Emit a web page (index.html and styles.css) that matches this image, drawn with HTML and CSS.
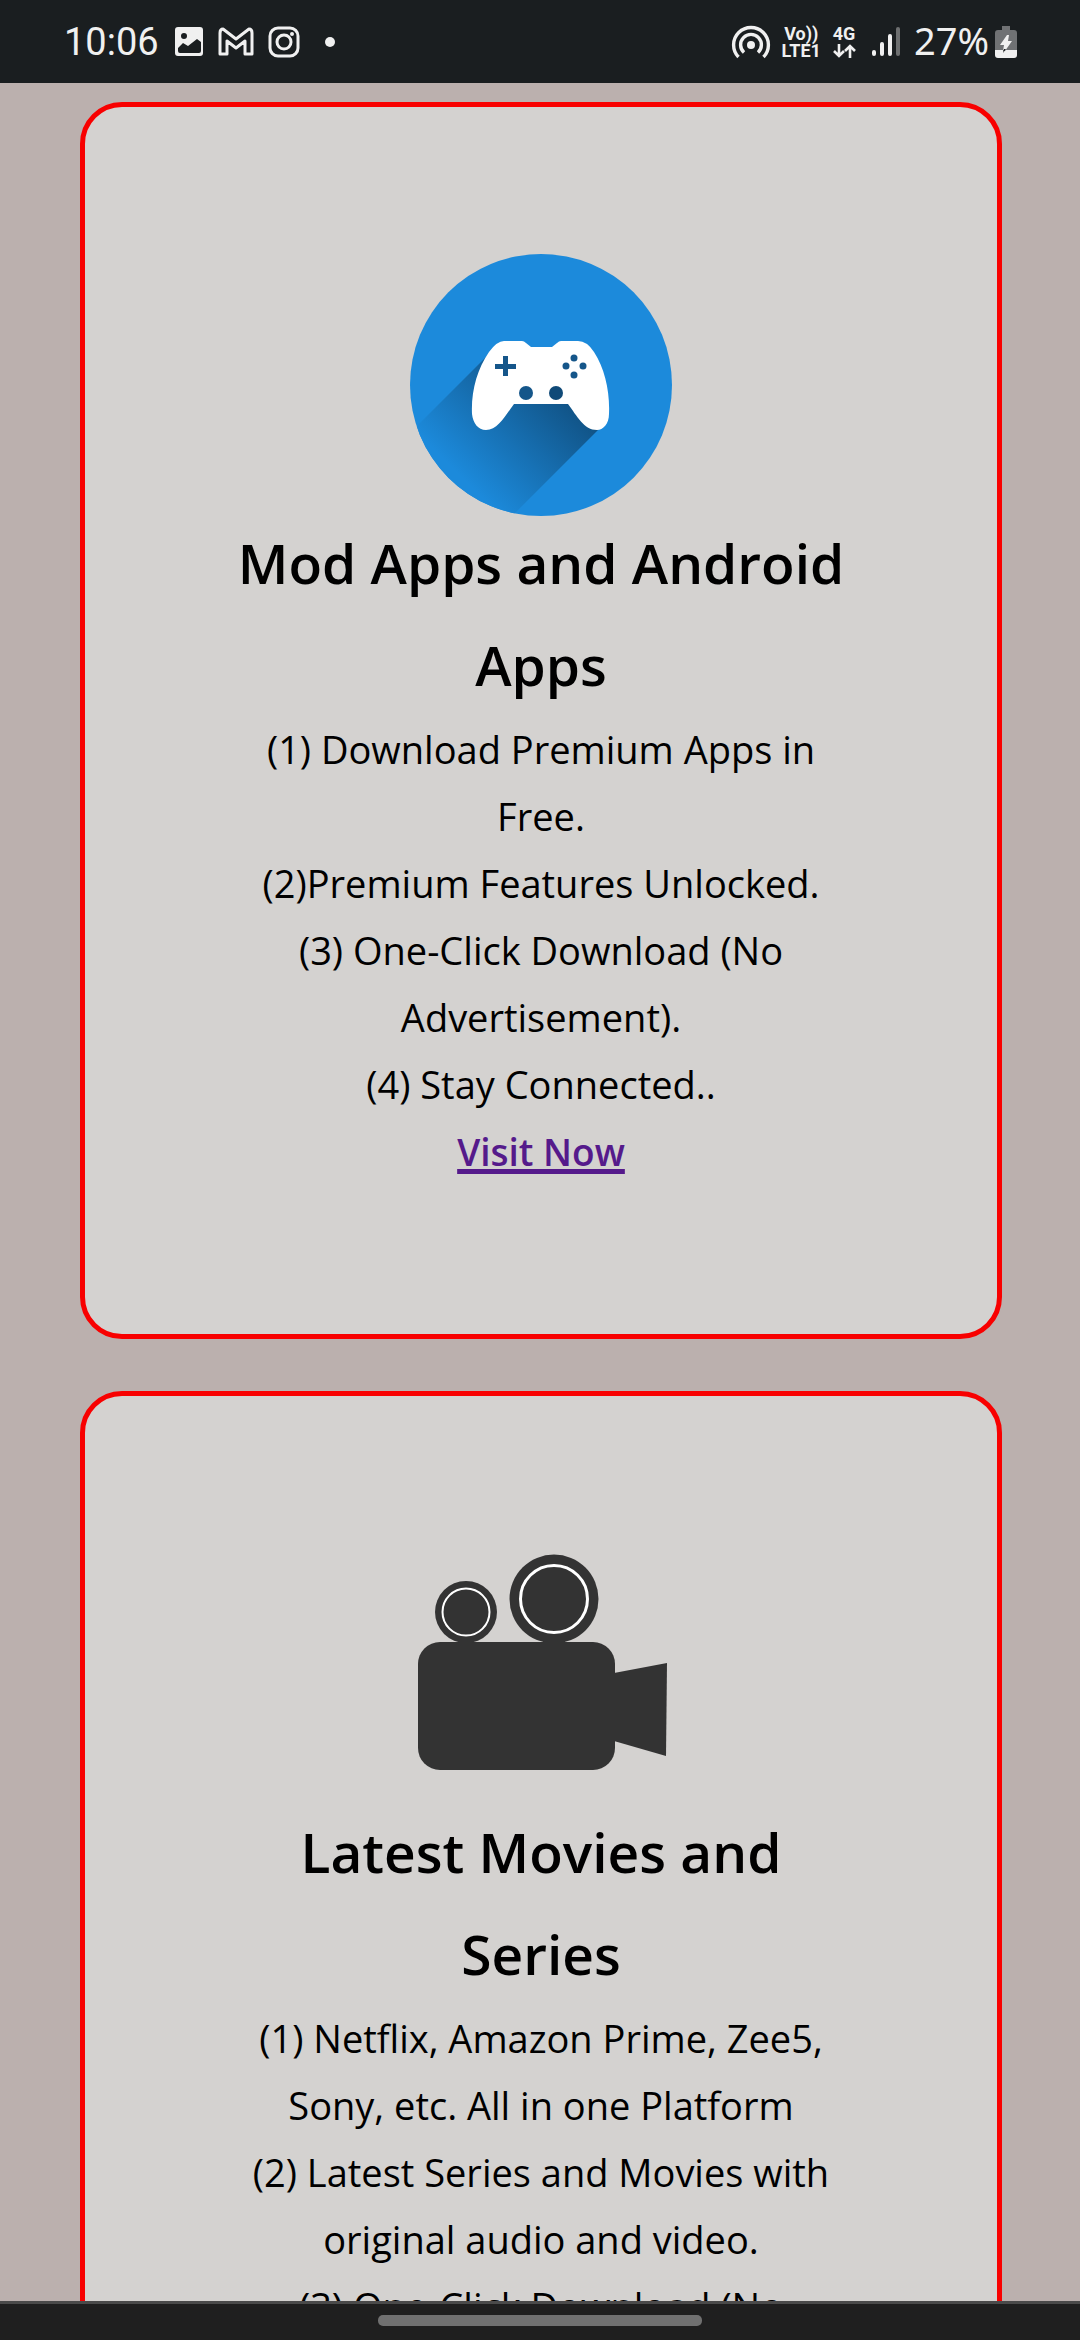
FILE: index.html
```html
<!DOCTYPE html>
<html lang="en">
<head>
<meta charset="utf-8">
<meta name="viewport" content="width=device-width, initial-scale=1">
<title>Mod Apps and Latest Movies</title>
<link rel="stylesheet" href="styles.css">
</head>
<body>
<header class="status">
  <div class="status-group">
    <span class="clock">10:06</span>
    <svg class="icon-picture" width="30" height="30" viewBox="0 0 30 30"><path fill="#f0f0f0" fill-rule="evenodd" d="M4 0H26Q29 0 29 3V26Q29 29 26 29H4Q1 29 1 26V3Q1 0 4 0ZM10 6A3 3 0 1 0 10 12A3 3 0 1 0 10 6ZM4 24Q4 26 6 26H25Q27 26 27 24V15L23 12L14 19L9 16L4 21Z"/></svg>
    <svg class="icon-mail" width="36" height="30" viewBox="0 0 36 30"><path fill="none" stroke="#f0f0f0" stroke-width="3" stroke-linejoin="round" d="M2 27V6Q2 2 5 2L18 12L31 2Q34 2 34 6V27H27V14L18 21L9 14V27Z"/></svg>
    <svg class="icon-camera" width="32" height="32" viewBox="0 0 32 32"><g fill="none" stroke="#f0f0f0" stroke-width="3"><rect x="2" y="2" width="28" height="28" rx="8"/><circle cx="16" cy="16" r="7"/></g><circle cx="24" cy="8" r="2" fill="#f0f0f0"/></svg>
    <span class="dot"></span>
  </div>
  <div class="status-group">
    <svg width="40" height="34" viewBox="0 0 40 34"><g fill="none" stroke="#f0f0f0" stroke-width="3.4"><path d="M7.500 32A17.400 17.400 0 1 1 32.500 32"/><path d="M13 27.500A10.400 10.400 0 1 1 27 27.500"/></g><circle cx="20" cy="20" r="4" fill="#f0f0f0"/></svg>
    <span class="network network-lte"><span>Vo))</span><span>LTE1</span></span>
    <span class="network network-4g"><span>4G</span>
      <svg width="24" height="14" viewBox="0 0 24 14"><path fill="none" stroke="#f0f0f0" stroke-width="2.600" d="M7 0V12M2 7L7 12L12 7M18 14V2M13 7L18 2L23 7"/></svg>
    </span>
    <svg class="icon-signal" width="28" height="30" viewBox="0 0 28 30"><path stroke="#f0f0f0" stroke-width="4" stroke-linecap="round" d="M2 25V27M10 17V27M18 9V27"/><path stroke="#6d6f70" stroke-width="4" stroke-linecap="round" d="M26 2V27"/></svg>
    <span class="percent">27%</span>
    <svg class="icon-battery" width="22" height="34" viewBox="0 0 22 34"><path fill="#707274" d="M7 1H15V5H19Q22 5 22 8V26H0V8Q0 5 3 5H7Z"/><path fill="#f0f0f0" d="M0 25H22V30Q22 33 19 33H3Q0 33 0 30ZM12 10L5 20H9L8 26H10L17 16H13L14 10Z"/><path fill="#1a1e20" d="M9 24H11L8 28Z"/></svg>
  </div>
</header>
<main class="cards">
  <section class="card">
    <svg class="card-art" viewBox="0 0 262 262" role="img" aria-label="Game controller">
      <defs>
        <linearGradient id="shade" gradientUnits="userSpaceOnUse" x1="172" y1="130" x2="65" y2="237"><stop offset="0" stop-color="#0f4a78"/><stop offset="1" stop-color="#1c8adb"/></linearGradient>
        <clipPath id="disc"><circle cx="131" cy="131" r="131"/></clipPath>
      </defs>
      <circle cx="131" cy="131" r="131" fill="#1c8adb"/>
      <g clip-path="url(#disc)"><path fill="url(#shade)" d="M78 101L-20 199L60 304L190 174L170 130Z"/></g>
      <path fill="#fff" d="M94 87H112Q114 87 116 89L121 93H142L147 89Q149 87 151 87H168Q177 87 184 98C195 115 200 138 199 160C199 170 193 176 187 176C174 176 167 162 158 150H104C95 162 88 176 76 176C68 176 63 169 62 160C61 138 67 115 79 98Q87 87 94 87Z"/>
      <path fill="#15568a" d="M93 102H98V110H106V115H98V122H93V115H85V110H93Z"/>
      <g fill="#15568a"><circle cx="116" cy="139" r="7"/><circle cx="164" cy="104" r="3.500"/><circle cx="156" cy="112" r="3.500"/><circle cx="173" cy="112" r="3.500"/><circle cx="164" cy="121" r="3.500"/></g>
      <circle cx="146" cy="139" r="7" fill="#104a78"/>
    </svg>
    <h2>Mod Apps and Android<br>Apps</h2>
    <p>(1) Download Premium Apps in<br>Free.</p>
    <p>(2)Premium Features Unlocked.</p>
    <p>(3) One-Click Download (No<br>Advertisement).</p>
    <p>(4) Stay Connected..</p>
    <a class="visit" href="#apps">Visit Now</a>
  </section>
  <section class="card">
    <svg class="card-art" viewBox="0 0 262 262" role="img" aria-label="Movie camera">
      <g fill="#333">
        <rect x="8" y="99" width="197" height="128" rx="22"/>
        <circle cx="56" cy="69" r="31"/><circle cx="144" cy="56" r="44.500"/>
        <path d="M204 130L257 120L256 213L204 198Z"/>
        <path d="M50 97H62V101H50ZM133 97H155V101H133Z"/>
      </g>
      <circle cx="56" cy="69" r="23.500" fill="none" stroke="#fff" stroke-width="2"/>
      <circle cx="144" cy="56" r="33.500" fill="none" stroke="#fff" stroke-width="3"/>
    </svg>
    <h2>Latest Movies and<br>Series</h2>
    <p>(1) Netflix, Amazon Prime, Zee5,<br>Sony, etc. All in one Platform</p>
    <p>(2) Latest Series and Movies with<br>original audio and video.</p>
    <p>(3) One-Click Download (No<br>Advertisement).</p>
  </section>
</main>
<footer class="nav"><span class="handle"></span></footer>
</body>
</html>
```
FILE: styles.css
```css
* { box-sizing: border-box; }
body {
  margin: 0;
  height: 100vh;
  display: flex;
  flex-direction: column;
  overflow: hidden;
  background: #bbb0ae;
  color: #000;
  font-family: "Open Sans", "Noto Sans", sans-serif;
}
svg { display: block; flex: none; }
.status {
  flex: none;
  height: 83px;
  padding: 0 63px 0 64px;
  display: flex;
  justify-content: space-between;
  align-items: center;
  background: #1a1e20;
  color: #f0f0f0;
}
.status-group { display: flex; align-items: center; }
.clock { font: 400 38px/48px Roboto, sans-serif; }
.icon-picture { margin-left: 15px; }
.icon-mail { margin-left: 14px; }
.icon-camera { margin-left: 14px; }
.dot { width: 10px; height: 10px; margin-left: 25px; border-radius: 50%; background: #f0f0f0; }
.network {
  display: flex;
  flex-direction: column;
  align-items: center;
  font: 700 18px/17px Roboto, sans-serif;
}
.network-lte { margin-left: 11px; }
.network-4g { margin-left: 11px; }
.network-4g svg { margin-top: 2px; }
.icon-signal { margin-left: 16px; }
.percent { margin-left: 14px; padding-bottom: 4px; font: 400 38px/48px "Noto Sans", sans-serif; }
.icon-battery { margin-left: 6px; }
.cards {
  flex: 1;
  min-height: 0;
  overflow: hidden;
  padding: 19px 78px 0 80px;
}
.card {
  margin-bottom: 52px;
  padding: 147px 100px 149px;
  display: flex;
  flex-direction: column;
  align-items: center;
  border: 5px solid #f80000;
  border-radius: 42px;
  background: #d4d2d0;
  text-align: center;
  font-size: 38px;
  line-height: 67px;
}
.card-art { width: 262px; height: 262px; }
.card h2 { margin: -4px 0 0; font-size: 55px; line-height: 102px; font-weight: 600; }
.card p { margin: 0; }
.visit { color: #551a8b; font-size: 37px; font-weight: 600; text-decoration-thickness: 5px; }
.nav {
  flex: none;
  height: 39px;
  padding-bottom: 3px;
  display: flex;
  justify-content: center;
  align-items: center;
  border-top: 3px solid #4a4a4a;
  background: #1f1f1f;
}
.handle { width: 30%; height: 11px; border-radius: 5px; background: #707070; }
```
